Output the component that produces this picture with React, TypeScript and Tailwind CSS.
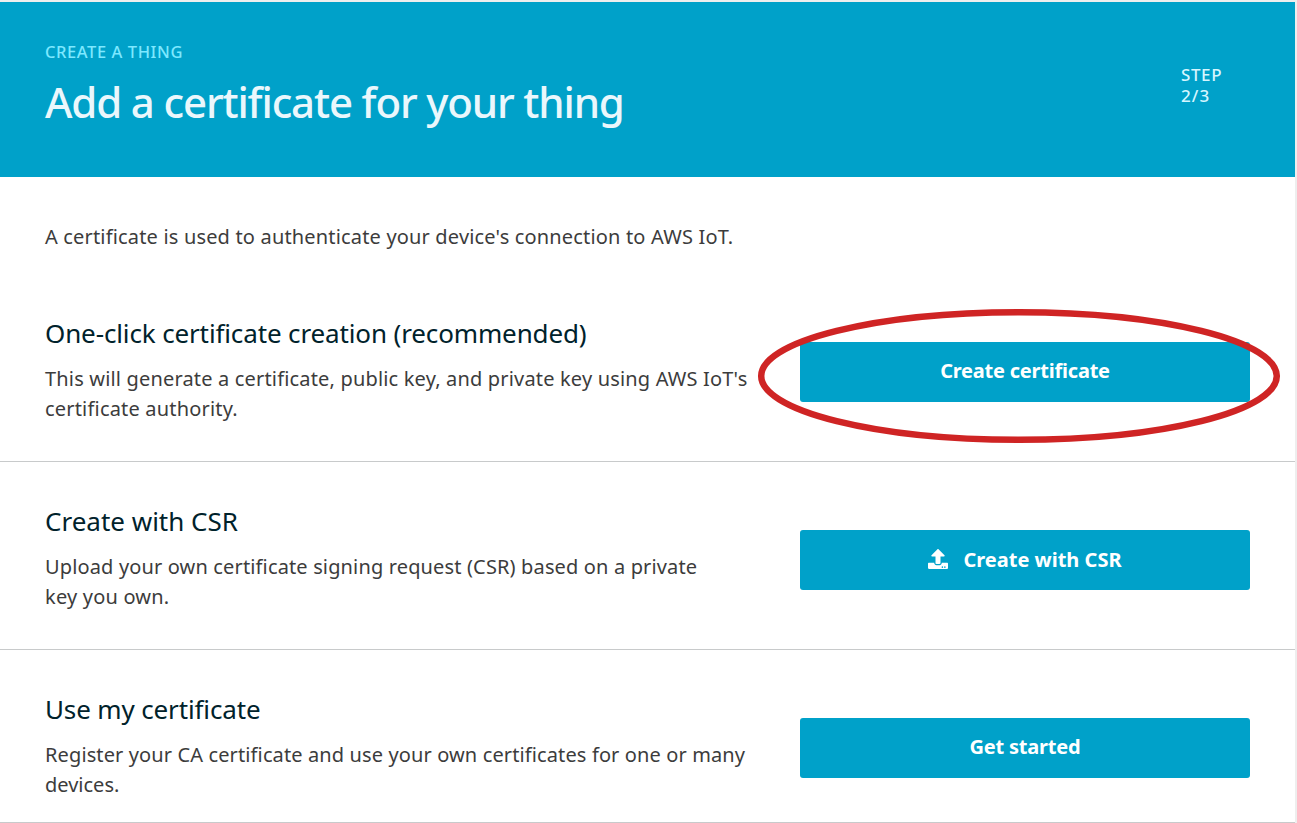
import type { ReactNode } from 'react';
import { FaUpload } from 'react-icons/fa';

type OptionProps = {
  title: ReactNode;
  lines: ReactNode[];
  action: ReactNode;
  className: string;
};

function Option({ title, lines, action, className }: OptionProps) {
  return (
    <section className={`flex items-start border-b border-[#c8cacb] pl-[45px] pr-[45px] ${className}`}>
      <div className="w-[755px] shrink-0 whitespace-nowrap pt-[40px]">
        <h2 className="text-[26px] leading-[38px] text-[#00222b]">{title}</h2>
        <p className="mt-[12px] text-[20px] leading-[30px] text-[#3c3c3c]">
          {lines.map((line, i) => (
            <span key={i} className="block">{line}</span>
          ))}
        </p>
      </div>
      <div className="w-[450px] pt-[68px]">
        <button className="flex h-[60px] w-full items-center justify-center gap-[15px] rounded-[3px] bg-[#00a1c9] pb-[2px] text-[20px] font-bold text-white">
          {action}
        </button>
      </div>
    </section>
  );
}

export default function App() {
  return (
    <div className="h-[823px] w-[1297px] overflow-hidden bg-[#eeeeee] pr-[2px] pt-[2px] font-['Noto_Sans',sans-serif]">
      <main className="relative h-[821px] bg-white">
        <header className="flex h-[175px] justify-between whitespace-nowrap bg-[#00a1c9] pl-[45px]">
          <div className="pt-[38px]">
            <div className="text-[16.5px] leading-[24px] font-medium text-[#7de8ff]"><span className="tracking-[0.58px]">CREATE A THING</span></div>
            <h1 className="mt-[9px] text-[42px] leading-[58px] font-medium text-[#eaf7fc]"><span className="tracking-[-1.16px]">Add a certificate for your thing</span></h1>
          </div>
          <div className="w-[114px] pt-[62px] text-[17px] leading-[21px] font-medium text-[#d5f6ff]">
            <div><span className="tracking-[0.6px]">STEP</span></div>
            <div><span className="tracking-[1.1px]">2/3</span></div>
          </div>
        </header>
        <p className="h-[97px] whitespace-nowrap pl-[45px] pt-[45px] text-[20px] leading-[30px] text-[#3c3c3c]">
          <span className="tracking-[0.17px]">A certificate is used to authenticate your device's connection to AWS IoT.</span>
        </p>
        <Option
          className="h-[188px]"
          title={<span className="tracking-[-0.13px]">One-click certificate creation (recommended)</span>}
          lines={[
            <span className="tracking-[0.17px]">This will generate a certificate, public key, and private key using AWS IoT's</span>,
            <span className="tracking-[0.19px]">certificate authority.</span>,
          ]}
          action={<span className="tracking-[-0.22px]">Create certificate</span>}
        />
        <Option
          className="h-[188px]"
          title={<span>Create with CSR</span>}
          lines={[
            <span className="tracking-[0.145px]">Upload your own certificate signing request (CSR) based on a private</span>,
            <span className="tracking-[0.2px]">key you own.</span>,
          ]}
          action={<><FaUpload className="size-[20px]" /><span className="pt-[2px]">Create with CSR</span></>}
        />
        <Option
          className="h-[173px]"
          title={<span className="tracking-[-0.14px]">Use my certificate</span>}
          lines={[
            <span className="tracking-[0.12px]">Register your CA certificate and use your own certificates for one or many</span>,
            <span>devices.</span>,
          ]}
          action={<span className="tracking-[-0.2px]">Get started</span>}
        />
        <svg className="pointer-events-none absolute left-[757px] top-[306px]" width="524" height="136" viewBox="0 0 524 136">
          <ellipse cx="262" cy="68" rx="257.8" ry="63.8" fill="none" stroke="#cf2424" strokeWidth="6.5" />
        </svg>
      </main>
    </div>
  );
}
